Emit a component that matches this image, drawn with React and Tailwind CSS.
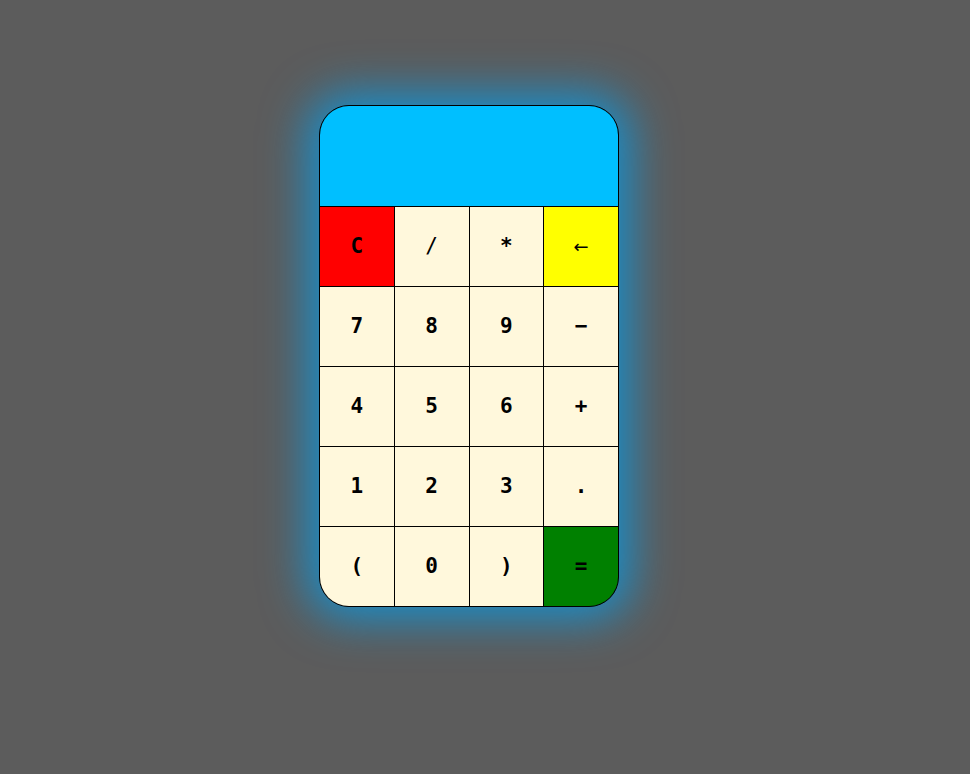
import React from "react";

const keys = [
  { k: "C", bg: "bg-[#ff0000]" },
  { k: "/", slash: true },
  { k: "*" },
  { k: "←", bg: "bg-[#ffff00]", thin: true },
  { k: "7" }, { k: "8" }, { k: "9" }, { k: "−" },
  { k: "4" }, { k: "5" }, { k: "6" }, { k: "+" },
  { k: "1" }, { k: "2" }, { k: "3" }, { k: "." },
  { k: "(" }, { k: "0" }, { k: ")" }, { k: "=", bg: "bg-[#008000]" },
];

export default function App() {
  return (
    <div className="min-h-[774px] w-full bg-[#5c5c5c] pt-[105px] pl-[319px]">
      <div className="w-[300px] rounded-[30px] border border-black overflow-hidden bg-black shadow-[0_0_45px_12px_rgba(0,160,240,0.75)] flex flex-col gap-px">
        <div className="h-[100px] bg-[#00bfff]"></div>
        <div className="grid grid-cols-4 grid-rows-[repeat(5,79px)] gap-px">
          {keys.map((b, i) => (
            <div
              key={i}
              className={`${b.bg || "bg-[#fff8dc]"} flex items-center justify-center text-black ${
                b.thin
                  ? "font-['DejaVu_Sans',sans-serif] text-[18px] font-normal"
                  : b.slash
                  ? "font-['DejaVu_Sans_Mono',monospace] text-[21px] font-normal"
                  : "font-['DejaVu_Sans_Mono',monospace] text-[21px] font-bold"
              }`}
            >
              {b.k}
            </div>
          ))}
        </div>
      </div>
    </div>
  );
}
